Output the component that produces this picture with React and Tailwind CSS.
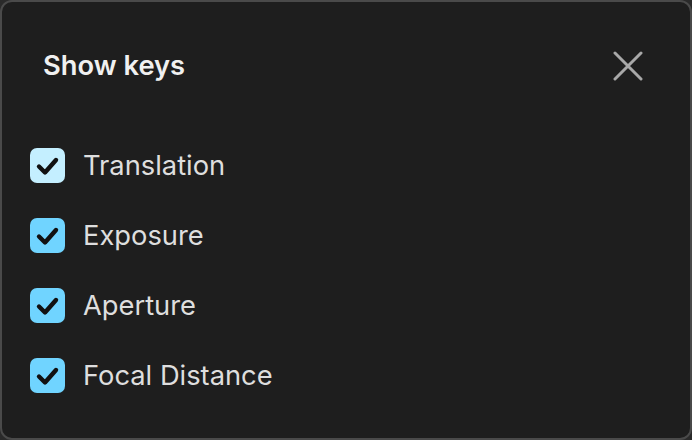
import React from "react";

const items = ["Translation", "Exposure", "Aperture", "Focal Distance"];

function Check({ light }) {
  return (
    <div
      className={`w-[35px] h-[35px] rounded-[7px] flex items-center justify-center ${
        light ? "bg-[#c4efff]" : "bg-[#70d4ff]"
      }`}
    >
      <svg width="35" height="35" viewBox="0 0 35 35" fill="none">
        <path
          d="M9 18.5l6 6L26 12"
          stroke="#111"
          strokeWidth="4.4"
          strokeLinecap="round"
          strokeLinejoin="round"
        />
      </svg>
    </div>
  );
}

export default function App() {
  return (
    <div className="w-[692px] h-[440px] bg-[#2a2a2a]" style={{ fontFamily: "Inter, 'Noto Sans', sans-serif" }}>
      <div className="w-full h-full rounded-[12px] border-2 border-[#4a4a4a] bg-[#1e1e1e] flex flex-col">
        <div className="flex items-center justify-between pl-[41px] pr-[47px] pt-[47px]">
          <div className="text-[27.3px] font-semibold text-[#f0f0f0] leading-[34px]">Show keys</div>
          <svg width="30" height="30" viewBox="0 0 30 30">
            <path d="M2 2L28 28M28 2L2 28" stroke="#a8a8a8" strokeWidth="3" strokeLinecap="round" />
          </svg>
        </div>
        <div className="flex flex-col gap-[35px] pl-[28px] mt-[65px]">
          {items.map((t, i) => (
            <div key={t} className="flex items-center gap-[18px] h-[35px]">
              <Check light={i === 0} />
              <span className="text-[27.3px] text-[#dedede] leading-[34px]">{t}</span>
            </div>
          ))}
        </div>
      </div>
    </div>
  );
}
